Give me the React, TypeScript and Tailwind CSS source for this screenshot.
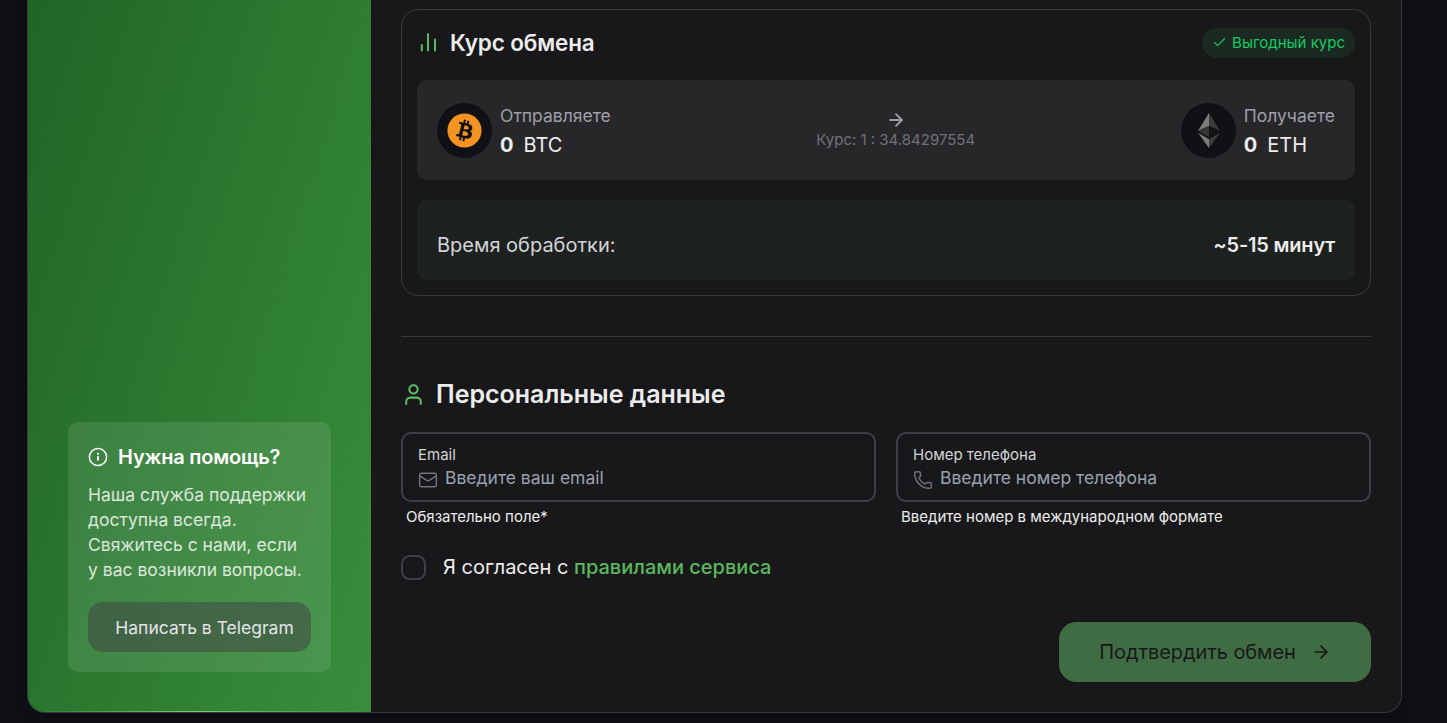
import type { ReactNode } from "react";
import { ArrowRight, Check, Mail, Phone, User } from "lucide-react";

type CoinProps = {
  icon: ReactNode;
  label: string;
  amount: string;
  symbol: string;
};

type FieldProps = {
  icon: ReactNode;
  label: string;
  type: string;
  placeholder: string;
  description: string;
};

const InfoIcon = () => (
  <svg width="20" height="20" viewBox="0 0 20 20" fill="none">
    <circle cx="10" cy="10" r="8.6" stroke="currentColor" strokeWidth="1.5" />
    <path d="M10 9.2v4.4" stroke="currentColor" strokeWidth="2" />
    <circle cx="10" cy="6.8" r="1.1" fill="currentColor" />
  </svg>
);

const BarsIcon = () => (
  <svg
    className="-mr-0.5 -ml-px shrink-0 text-[#5bb85f]"
    width="26"
    height="25"
    viewBox="0 0 26 25"
    fill="none"
    stroke="currentColor"
    strokeWidth="2"
    strokeLinecap="round"
  >
    <path d="M19 20.5v-11M12 20.5V4M5.8 20.5V15" />
  </svg>
);

const BitcoinIcon = () => (
  <svg width="35" height="35" viewBox="0 0 32 32">
    <circle cx="16" cy="16" r="15.6" fill="#f59322" />
    <path
      fill="#101115"
      d="M23.189 14.02c.314-2.096-1.283-3.223-3.465-3.975l.708-2.84-1.728-.43-.69 2.765c-.454-.114-.92-.22-1.385-.326l.695-2.783L15.596 6l-.708 2.839c-.376-.086-.746-.17-1.104-.26l.002-.009-2.384-.595-.46 1.846s1.283.294 1.256.312c.7.175.826.638.805 1.006l-.806 3.235c.048.012.11.03.18.057l-.183-.045-1.13 4.532c-.086.212-.303.531-.793.41.018.025-1.256-.313-1.256-.313l-.858 1.978 2.25.561c.418.105.828.215 1.231.318l-.715 2.872 1.727.43.708-2.84c.472.127.93.245 1.378.357l-.706 2.828 1.728.43.715-2.866c2.948.558 5.164.333 6.097-2.333.752-2.146-.037-3.385-1.588-4.192 1.13-.26 1.98-1.003 2.207-2.538zm-3.95 5.538c-.533 2.147-4.148.986-5.32.695l.95-3.805c1.172.293 4.929.872 4.37 3.11zm.535-5.569c-.487 1.953-3.495.96-4.47.717l.86-3.45c.975.243 4.118.696 3.61 2.733z"
    />
  </svg>
);

const EthereumIcon = () => (
  <svg className="ml-px" width="22" height="35" viewBox="9 4 15 24">
    <path fill="#7d7d7d" d="M16.498 4 9 16.22l7.498-3.35z" />
    <path fill="#3c3c3b" d="M16.498 4v8.87l7.497 3.35z" />
    <path fill="#343434" d="m9 16.22 7.498 4.353v-7.701z" />
    <path fill="#141414" d="m16.498 20.573 7.497-4.353-7.497-3.348z" />
    <path fill="#7d7d7d" d="M16.498 27.995v-6.028L9 17.616z" />
    <path fill="#3c3c3b" d="M16.498 21.968v6.027L24 17.616z" />
  </svg>
);

const Coin = ({ icon, label, amount, symbol }: CoinProps) => (
  <div className="flex items-center gap-2">
    <div className="flex size-[55px] items-center justify-center rounded-full bg-[#101115]">
      {icon}
    </div>
    <div className="pt-0.5">
      <p className="text-[17.5px] leading-[25px] text-zinc-400">{label}</p>
      <p className="flex gap-2.5 pt-0.5 text-xl leading-[30px] text-[#ececec]">
        <span className="font-bold">{amount}</span>
        <span>{symbol}</span>
      </p>
    </div>
  </div>
);

const Field = ({ icon, label, type, placeholder, description }: FieldProps) => (
  <div>
    <label className="flex h-[70px] flex-col rounded-[10px] border-2 border-zinc-700 px-[15px] pt-[11px]">
      <span className="text-[15px] leading-5 text-zinc-300">{label}</span>
      <span className="flex h-[25px] items-center gap-[7px] text-zinc-500">
        <span className="pt-[5px]">{icon}</span>
        <input
          type={type}
          placeholder={placeholder}
          className="min-w-0 flex-1 bg-transparent text-[17.5px] leading-[25px] outline-none placeholder:text-[#99a1af]"
        />
      </span>
    </label>
    <p className="px-[5px] pt-[5px] text-[15px] leading-5 text-[#ececec]">
      {description}
    </p>
  </div>
);

const HelpCard = () => (
  <div className="rounded-[10px] bg-white/10 p-5">
    <div className="flex h-[30px] items-center gap-2.5 text-white">
      <InfoIcon />
      <h3 className="text-xl font-semibold tracking-[-0.2px]">
        Нужна помощь?
      </h3>
    </div>
    <p className="mt-2.5 text-[17.5px] leading-[25px] text-white/80">
      Наша служба поддержки доступна всегда. Свяжитесь с нами, если у вас
      возникли вопросы.
    </p>
    <button className="mt-5 flex h-[50px] w-full items-center justify-center rounded-[15px] bg-[#3f3f46]/50 pt-0.5 pl-2.5 text-[17.5px] whitespace-nowrap text-zinc-200">
      Написать в Telegram
    </button>
  </div>
);

const RateCard = () => (
  <section className="rounded-[17.5px] border border-[#3a3a3c] p-[15px]">
    <div className="flex h-[35px] items-center justify-between">
      <div className="flex items-center gap-2.5">
        <BarsIcon />
        <h3 className="text-[22.5px] font-semibold tracking-[-0.15px] text-[#ececec]">
          Курс обмена
        </h3>
      </div>
      <span className="flex h-[30px] items-center gap-[5px] rounded-full bg-[#1a2a21] px-2.5 text-[15px] text-[#17c964]">
        <Check size={15} strokeWidth={1.7} />
        <span className="pt-px">Выгодный курс</span>
      </span>
    </div>
    <div className="mt-5 flex h-[100px] items-center justify-between rounded-[10px] bg-[#27272a] px-5">
      <Coin
        icon={<BitcoinIcon />}
        label="Отправляете"
        amount="0"
        symbol="BTC"
      />
      <div className="flex flex-col items-center">
        <ArrowRight size={20} strokeWidth={2.2} className="text-zinc-400" />
        <p className="text-[15px] leading-5 text-zinc-500">
          Курс: 1 : 34.84297554
        </p>
      </div>
      <Coin icon={<EthereumIcon />} label="Получаете" amount="0" symbol="ETH" />
    </div>
    <div className="mt-5 flex h-20 items-center justify-between rounded-[10px] bg-[#1d211f] px-5 pt-2.5 text-xl">
      <span className="text-zinc-300">Время обработки:</span>
      <span className="font-semibold tracking-[-0.2px] text-[#ececec]">
        ~5-15 минут
      </span>
    </div>
  </section>
);

export default function App() {
  return (
    <div className="flex h-[723px] flex-col justify-end overflow-hidden bg-[#0f1014] pr-[45px] pb-[10px] pl-[27px] font-['Inter',sans-serif]">
      <div className="flex h-[1085px] shrink-0 overflow-hidden rounded-[17.5px] border border-[#3a3a3c] bg-[#18181a] shadow-lg">
        <aside className="relative flex w-[343px] shrink-0 flex-col justify-end bg-linear-to-br from-[#1b5e20] to-[#388e3c] p-10">
          <HelpCard />
          <div className="absolute inset-x-0 bottom-0 h-px bg-linear-to-r from-transparent via-[#81c784] to-transparent" />
        </aside>
        <main className="flex flex-1 flex-col justify-end p-[30px]">
          <RateCard />
          <hr className="mt-10 border-[#3a3a3c]" />
          <div className="mt-10 flex h-[35px] items-center gap-2.5">
            <User size={25} className="text-[#5bb85f]" />
            <h2 className="text-[25px] font-semibold text-[#ececec]">
              Персональные данные
            </h2>
          </div>
          <div className="mt-5 grid grid-cols-2 gap-5">
            <Field
              icon={<Mail size={20} strokeWidth={1.8} />}
              label="Email"
              type="email"
              placeholder="Введите ваш email"
              description="Обязательно поле*"
            />
            <Field
              icon={<Phone size={20} strokeWidth={1.8} />}
              label="Номер телефона"
              type="tel"
              placeholder="Введите номер телефона"
              description="Введите номер в международном формате"
            />
          </div>
          <label className="mt-[25px] flex h-[30px] items-center text-xl text-[#ececec]">
            <span className="mr-[17px] size-[25px] rounded-[8.75px] border-2 border-zinc-700" />
            <span>
              Я согласен с{" "}
              <a className="font-medium text-[#5bb85f]">правилами сервиса</a>
            </span>
          </label>
          <button
            disabled
            className="mt-10 flex h-[60px] w-[312px] items-center justify-center gap-[15px] self-end rounded-[17.5px] bg-[#406c43] text-xl tracking-[-0.08px] text-[#18181a]"
          >
            Подтвердить обмен
            <ArrowRight size={20} strokeWidth={2} />
          </button>
        </main>
      </div>
    </div>
  );
}
